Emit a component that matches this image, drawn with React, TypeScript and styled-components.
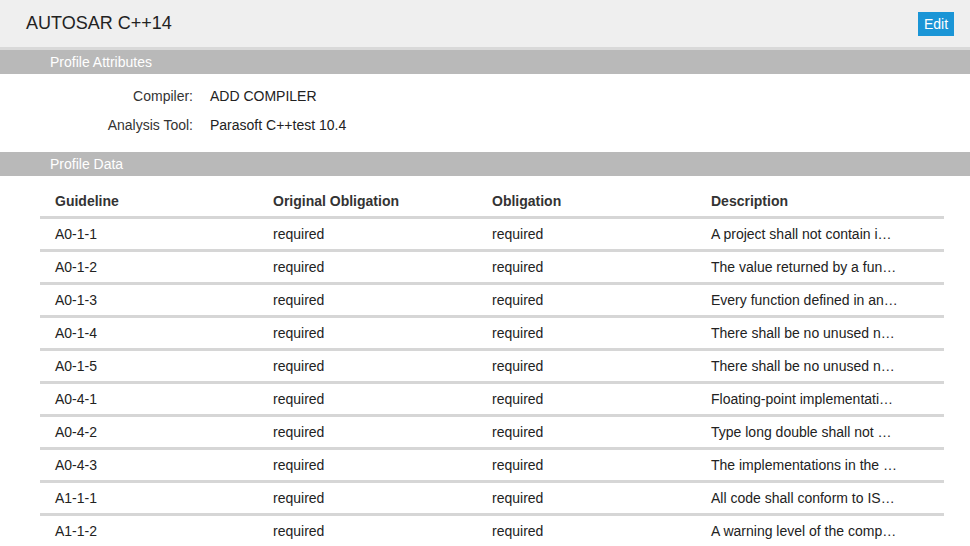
import React from "react";
import styled, { createGlobalStyle } from "styled-components";

const GlobalStyle = createGlobalStyle`
  body {
    margin: 0;
    background: #ffffff;
    font-family: "Liberation Sans", Arial, Helvetica, sans-serif;
    color: #333333;
  }
`;

interface Rule {
  id: string;
  original: string;
  obligation: string;
  description: string;
}

const rules: Rule[] = [
  { id: "A0-1-1", original: "required", obligation: "required", description: "A project shall not contain i…" },
  { id: "A0-1-2", original: "required", obligation: "required", description: "The value returned by a fun…" },
  { id: "A0-1-3", original: "required", obligation: "required", description: "Every function defined in an…" },
  { id: "A0-1-4", original: "required", obligation: "required", description: "There shall be no unused n…" },
  { id: "A0-1-5", original: "required", obligation: "required", description: "There shall be no unused n…" },
  { id: "A0-4-1", original: "required", obligation: "required", description: "Floating-point implementati…" },
  { id: "A0-4-2", original: "required", obligation: "required", description: "Type long double shall not …" },
  { id: "A0-4-3", original: "required", obligation: "required", description: "The implementations in the …" },
  { id: "A1-1-1", original: "required", obligation: "required", description: "All code shall conform to IS…" },
  { id: "A1-1-2", original: "required", obligation: "required", description: "A warning level of the comp…" },
];

const App: React.FC = () => {
  return (
    <>
      <GlobalStyle />
      <Page>
        <Header>
          <Title>AUTOSAR C++14</Title>
          <EditButton>Edit</EditButton>
        </Header>
        <SectionBar>Profile Attributes</SectionBar>
        <Attributes>
          <AttrLabel>Compiler:</AttrLabel>
          <AttrValue>ADD COMPILER</AttrValue>
          <AttrLabel>Analysis Tool:</AttrLabel>
          <AttrValue>Parasoft C++test 10.4</AttrValue>
        </Attributes>
        <SectionBar>Profile Data</SectionBar>
        <Table>
          <HeadRow>
            <HeadCell>Guideline</HeadCell>
            <HeadCell>Original Obligation</HeadCell>
            <HeadCell>Obligation</HeadCell>
            <HeadCell>Description</HeadCell>
          </HeadRow>
          {rules.map((r) => (
            <Row key={r.id}>
              <Cell>{r.id}</Cell>
              <Cell>{r.original}</Cell>
              <Cell>{r.obligation}</Cell>
              <Cell>{r.description}</Cell>
            </Row>
          ))}
        </Table>
      </Page>
    </>
  );
};

const Page = styled.div`
  width: 970px;
  min-height: 546px;
`;

const Header = styled.div`
  height: 47px;
  background: #efefef;
  border-bottom: 3px solid #d9d9d9;
  display: flex;
  align-items: center;
  justify-content: space-between;
  padding: 0 16px 0 26px;
`;

const Title = styled.h1`
  margin: 0;
  font-size: 18px;
  font-weight: normal;
  color: #222222;
`;

const EditButton = styled.button`
  height: 24px;
  width: 36px;
  padding: 0;
  border: none;
  background: #1a95d6;
  color: #ffffff;
  font-family: "Liberation Sans", Arial, sans-serif;
  font-size: 14px;
  cursor: pointer;
`;

const SectionBar = styled.div`
  height: 24px;
  line-height: 24px;
  background: #b9b9b9;
  color: #ffffff;
  font-size: 14px;
  padding-left: 50px;
`;

const Attributes = styled.div`
  display: grid;
  grid-template-columns: 193px 1fr;
  grid-auto-rows: 29px;
  column-gap: 17px;
  align-items: center;
  padding: 7px 0 13px;
  font-size: 14px;
`;

const AttrLabel = styled.div`
  text-align: right;
  color: #333333;
`;

const AttrValue = styled.div`
  color: #222222;
`;

const Table = styled.div`
  margin: 10px 26px 0 40px;
  font-size: 14px;
`;

const HeadRow = styled.div`
  display: grid;
  grid-template-columns: 218px 219px 219px 1fr;
  height: 30px;
  align-items: center;
`;

const Row = styled(HeadRow)`
  border-top: 3px solid #d6d6d6;
`;

const HeadCell = styled.div`
  padding-left: 15px;
  font-weight: bold;
  color: #333333;
`;

const Cell = styled.div`
  padding-left: 15px;
  color: #222222;
  white-space: nowrap;
  overflow: hidden;
  text-overflow: ellipsis;
`;

export default App;
